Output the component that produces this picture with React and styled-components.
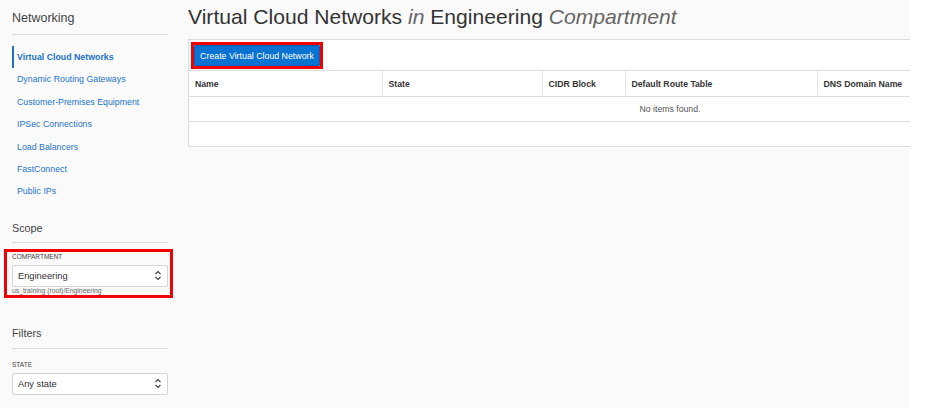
import React from "react";
import styled, { createGlobalStyle } from "styled-components";

const GlobalStyle = createGlobalStyle`
  html, body {
    margin: 0;
    padding: 0;
    background: #ffffff;
    font-family: "Liberation Sans", Arial, sans-serif;
  }
  * { box-sizing: border-box; }
`;

const navItems = [
  "Virtual Cloud Networks",
  "Dynamic Routing Gateways",
  "Customer-Premises Equipment",
  "IPSec Connections",
  "Load Balancers",
  "FastConnect",
  "Public IPs",
];

const columns = [
  { label: "Name", width: 193 },
  { label: "State", width: 160 },
  { label: "CIDR Block", width: 83 },
  { label: "Default Route Table", width: 192 },
  { label: "DNS Domain Name", width: 334 },
];

const Chevrons = () => (
  <svg width="8" height="11" viewBox="0 0 8 11" fill="none" stroke="#444" strokeWidth="1.2">
    <path d="M1.5 4 L4 1.5 L6.5 4" />
    <path d="M1.5 7 L4 9.5 L6.5 7" />
  </svg>
);

const App = () => {
  return (
    <Page>
      <GlobalStyle />
      <Sidebar>
        <SectionTitle $top={8} $pad={6} $size={12.5}>Networking</SectionTitle>
        <NavList>
          {navItems.map((item, idx) => (
            <NavItem key={item} $active={idx === 0}>
              {item}
            </NavItem>
          ))}
        </NavList>
        <SectionTitle $top={16} $pad={5}>Scope</SectionTitle>
        <Highlight className="scope_box">
          <FieldLabel>Compartment</FieldLabel>
          <Select>
            <span>Engineering</span>
            <Chevrons />
          </Select>
          <Hint>us_training (root)/Engineering</Hint>
        </Highlight>
        <SectionTitle $top={26} $pad={6}>Filters</SectionTitle>
        <FieldLabel $top={11}>State</FieldLabel>
        <Select>
          <span>Any state</span>
          <Chevrons />
        </Select>
      </Sidebar>
      <Main>
        <PageTitle>
          Virtual Cloud Networks <em>in</em> Engineering <em>Compartment</em>
        </PageTitle>
        <Panel>
          <Toolbar>
            <Highlight className="button_box">
              <PrimaryButton>Create Virtual Cloud Network</PrimaryButton>
            </Highlight>
          </Toolbar>
          <Table>
            <colgroup>
              {columns.map((c) => (
                <col key={c.label} style={{ width: c.width }} />
              ))}
            </colgroup>
            <thead>
              <tr>
                {columns.map((c) => (
                  <Th key={c.label}>{c.label}</Th>
                ))}
              </tr>
            </thead>
            <tbody>
              <tr>
                <EmptyCell colSpan={columns.length}>No items found.</EmptyCell>
              </tr>
            </tbody>
          </Table>
          <PanelFooter />
        </Panel>
      </Main>
      <RightGutter />
    </Page>
  );
};

export default App;

const Page = styled.div`
  display: flex;
  width: 946px;
  height: 408px;
  overflow: hidden;
`;

const Sidebar = styled.aside`
  width: 180px;
  flex-shrink: 0;
  background: #fafafa;
  padding: 0 12px;
  display: flex;
  flex-direction: column;
`;

const SectionTitle = styled.div`
  margin-top: ${(p) => p.$top}px;
  padding-bottom: ${(p) => p.$pad}px;
  border-bottom: 1px solid #dcdcdc;
  font-size: ${(p) => p.$size || 10.8}px;
  line-height: ${(p) => (p.$size ? 20 : 18)}px;
  color: #444;
`;

const NavList = styled.ul`
  list-style: none;
  margin: 11px 0 0;
  padding: 0;
`;

const NavItem = styled.li`
  height: 22.4px;
  line-height: 22.4px;
  padding-left: 3px;
  font-size: 8.8px;
  color: #1a73c8;
  font-weight: ${(p) => (p.$active ? 700 : 400)};
  border-left: 2px solid ${(p) => (p.$active ? "#1a73c8" : "transparent")};
  white-space: nowrap;
`;

const Highlight = styled.div`
  border: 3px solid #f00000;
  &.scope_box {
    margin: 6px -5px 0 -8px;
    padding: 0 2px 0 5px;
  }
  &.button_box {
    display: inline-block;
    padding: 0;
  }
`;

const FieldLabel = styled.div`
  margin-top: ${(p) => p.$top || 0}px;
  font-size: 6.5px;
  line-height: 9px;
  text-transform: uppercase;
  color: #444;
`;

const Select = styled.div`
  margin-top: 4px;
  height: 22px;
  background: #ffffff;
  border: 1px solid #d4d4d4;
  border-radius: 2px;
  display: flex;
  align-items: center;
  justify-content: space-between;
  padding: 0 5px 0 5px;
  font-size: 9.3px;
  color: #333;
`;

const Hint = styled.div`
  font-size: 6.8px;
  line-height: 8px;
  color: #666;
`;

const Main = styled.main`
  width: 730px;
  flex-shrink: 0;
  background: #fafafa;
  padding-left: 8px;
  overflow: hidden;
`;

const PageTitle = styled.h1`
  margin: 0;
  height: 39px;
  padding-top: 4px;
  font-size: 21.1px;
  line-height: 26px;
  font-weight: 400;
  color: #333;
  white-space: nowrap;
  em {
    color: #666;
  }
`;

const Panel = styled.section`
  width: 962px;
  background: #ffffff;
  border: 1px solid #dddddd;
`;

const Toolbar = styled.div`
  padding: 2px 2px 1px;
  display: flex;
`;

const PrimaryButton = styled.button`
  display: block;
  margin: 0;
  height: 21px;
  width: 126px;
  padding: 0;
  border: 1px solid #0060b8;
  background: #0a72d1;
  color: #ffffff;
  font-family: "Liberation Sans", Arial, sans-serif;
  font-size: 8.8px;
  border-radius: 1px;
`;

const Table = styled.table`
  width: 960px;
  border-collapse: collapse;
  table-layout: fixed;
`;

const Th = styled.th`
  height: 26px;
  padding: 0 6px;
  text-align: left;
  font-size: 8.7px;
  font-weight: 700;
  color: #333;
  border-top: 1px solid #dddddd;
  border-bottom: 1px solid #dddddd;
  border-left: 1px solid #e4e4e4;
  &:first-child {
    border-left: none;
  }
`;

const EmptyCell = styled.td`
  height: 25px;
  text-align: center;
  font-size: 8.7px;
  color: #555;
  border-bottom: 1px solid #dddddd;
`;

const PanelFooter = styled.div`
  height: 24px;
`;

const RightGutter = styled.div`
  flex: 1;
  background: #ffffff;
`;
